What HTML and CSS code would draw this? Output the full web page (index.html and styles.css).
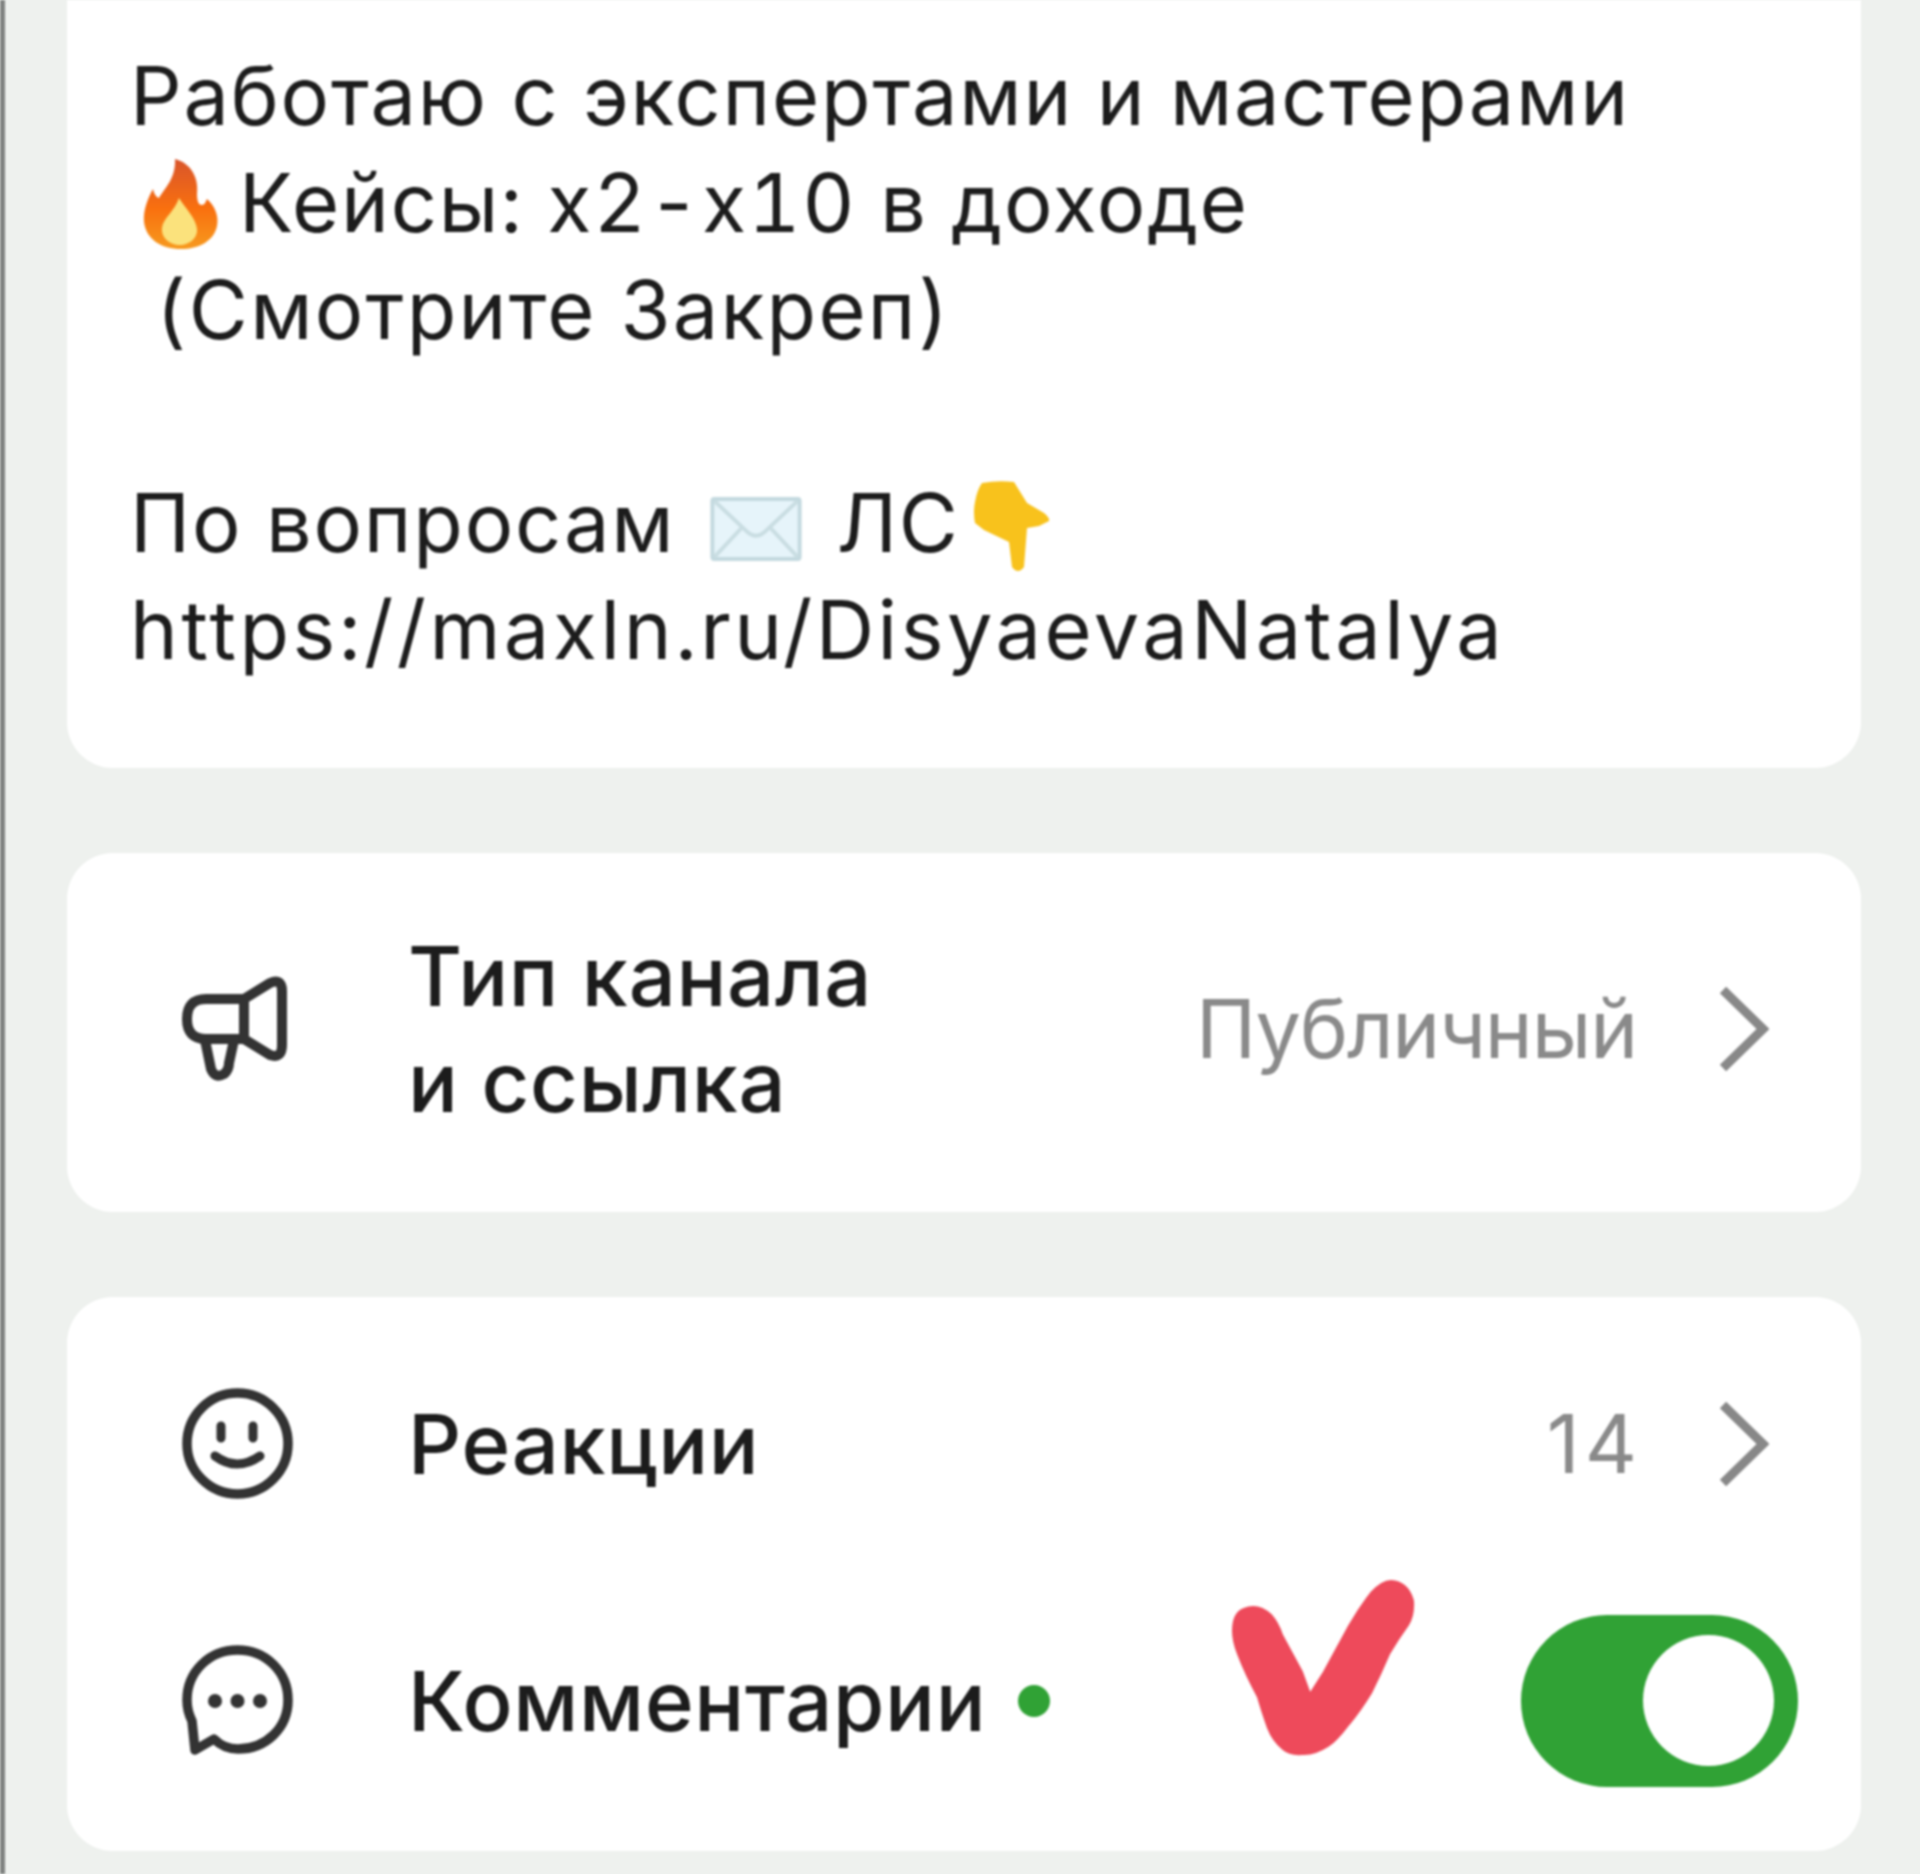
FILE: index.html
```html
<!DOCTYPE html>
<html lang="ru">
<head>
<meta charset="utf-8">
<title>Настройки канала</title>
<link rel="stylesheet" href="styles.css">
</head>
<body>
<div class="screen">
  <section class="card about">
    <p class="bio">Работаю с экспертами и мастерами<br><svg class="fire" viewBox="0 0 80 92"><defs><linearGradient id="fg" x1="0" y1="0" x2="0" y2="1"><stop offset="0" stop-color="#d9552b"/><stop offset=".55" stop-color="#f9700f"/><stop offset="1" stop-color="#f79a1e"/></linearGradient></defs><path fill="url(#fg)" d="M34 1C50 5 58 20 56 36C56 44 58 47 61 47C64 47 65 43 66 41C74 48 78 58 76 68C73 83 58 91 40 91C20 91 5 81 3 64C2 52 7 40 12 31C13 36 15 39 18 40C24 30 35 20 34 1Z"/><path fill="#fbe27c" d="M38 40C44 50 55 60 56 71C57 80 48 87 39 87C29 87 20 80 21 70C22 60 34 53 38 40Z"/></svg>Кейсы: x2-x10 в доходе<br><span class="indent">(Смотрите Закреп)</span><br><br>По вопросам <svg class="mail" viewBox="0 0 94 66"><rect x="2" y="2" width="90" height="62" rx="2" fill="#e6f4fa" stroke="#c3d9df" stroke-width="4"/><path d="M4 4L38 36Q47 44 56 36L90 4M4 62L32 32M90 62L62 32" fill="none" stroke="#c9dde2" stroke-width="4"/></svg> ЛС<svg class="hand" viewBox="0 0 76 92"><path fill="#f8c21c" d="M8 3Q24 0 40 2L53 23L70 33Q76 38 75 41L65 46L53 48L50 87Q44 95 38 87L35 62L10 50L1 43Q-1 32 1 22Q3 10 8 3Z"/></svg><br><span class="wide">https://maxln.ru/DisyaevaNatalya</span></p>
  </section>

  <section class="card">
    <div class="row row-tall">
      <div class="icon-cell">
        <svg class="icon" viewBox="0 0 111 111"><g fill="none" stroke="#333" stroke-width="10" stroke-linejoin="round" stroke-linecap="round" transform="translate(0 4)"><path d="M24 22H62V62H24Q5 62 5 42Q5 22 24 22Z"/><path d="M62 22L88 6Q100 1 100 14V68Q100 82 88 78L62 62"/><path d="M23 63L29 92Q33 102 42 97Q47 93 47 86L52 63"/></g></svg>
      </div>
      <div class="label grow">Тип канала<br>и ссылка</div>
      <div class="value">Публичный</div>
      <svg class="chev" viewBox="0 0 50 86"><path d="M4 4L44 43L4 82" fill="none" stroke="#888" stroke-width="9"/></svg>
    </div>
  </section>

  <section class="card list">
    <div class="row">
      <div class="icon-cell">
        <svg class="icon" viewBox="0 0 111 111"><circle cx="55.500" cy="55.500" r="50.500" fill="none" stroke="#333" stroke-width="9.500"/><path d="M39 38V50M71 38V50" stroke="#333" stroke-width="9" stroke-linecap="round"/><path d="M33 68Q55 84 78 68" fill="none" stroke="#333" stroke-width="9" stroke-linecap="round"/></svg>
      </div>
      <div class="label grow">Реакции</div>
      <div class="value count">14</div>
      <svg class="chev" viewBox="0 0 50 86"><path d="M4 4L44 43L4 82" fill="none" stroke="#888" stroke-width="9"/></svg>
    </div>
    <div class="row">
      <div class="icon-cell">
        <svg class="icon" viewBox="0 0 111 111"><path d="M55.500 5C84 5 106 27 106 55C106 83 84 104 56 104C46 104 38 100 32 94L13 105L10 76C7 70 5 63 5 55C5 27 27 5 55.500 5Z" fill="none" stroke="#333" stroke-width="9.500" stroke-linejoin="round"/><circle cx="33" cy="56" r="7" fill="#333"/><circle cx="55.500" cy="56" r="7" fill="#333"/><circle cx="78" cy="56" r="7" fill="#333"/></svg>
      </div>
      <div class="label">Комментарии</div>
      <span class="dot"></span>
      <div class="toggle"><span class="knob"></span></div>
      <svg class="tick" viewBox="0 0 185 178"><path d="M3 52Q3 34 14 30Q28 24 41 36Q48 44 52 56L72 93L80 115L94 93L119 47Q130 28 141 14Q152 2 161 2Q178 3 183 22Q184 36 178 46Q168 60 159 75Q150 96 141 114Q130 132 119 145Q108 160 98 167Q84 176 72 175Q60 176 53 170Q43 162 38 149Q32 132 28 118Q16 96 8 75Q3 62 3 52Z" fill="#ee4a5b" stroke="#ee4a5b" stroke-width="2" stroke-linejoin="round"/></svg>
    </div>
  </section>
</div>
</body>
</html>
```

FILE: styles.css
```css
html, body {
  margin: 0;
  padding: 0;
  height: 1874px;
  overflow: hidden;
  background: #eef1ee;
}

.screen {
  box-sizing: border-box;
  height: 1874px;
  padding: 0 59px 0 62px;
  border-left: 5px solid #7f8280;
  display: flex;
  flex-direction: column;
  gap: 85px;
  font-family: Inter, "Liberation Sans", sans-serif;
  color: #1c1c1c;
  filter: blur(1.1px);
}

.card {
  background: #fff;
  border-radius: 46px;
}

.about {
  box-sizing: border-box;
  height: 768px;
  padding: 43px 63px 0;
  border-radius: 0 0 46px 46px;
}

.bio {
  margin: 0;
  font-size: 81px;
  line-height: 106.800px;
  letter-spacing: 1.8px;
  white-space: nowrap;
  font-variant-numeric: tabular-nums;
}

.wide {
  letter-spacing: 3.500px;
}

.indent {
  margin-left: 25px;
  letter-spacing: 2.200px;
}

.fire {
  width: 80px;
  height: 92px;
  margin: 0 18px 0 11px;
  vertical-align: -18px;
}

.mail {
  width: 94px;
  height: 64px;
  margin: 0 10px;
  vertical-align: -9px;
}

.hand {
  width: 80px;
  height: 92px;
  margin-left: 12px;
  vertical-align: -20px;
}

.row {
  position: relative;
  display: flex;
  align-items: center;
  height: 257px;
  padding-right: 92px;
}

.row-tall {
  box-sizing: border-box;
  height: 359px;
  padding-bottom: 8px;
}

.list {
  padding: 18px 0 22px;
}

.icon-cell {
  box-sizing: border-box;
  width: 341px;
  padding-left: 115px;
  flex: none;
}

.icon {
  display: block;
  width: 111px;
  height: 111px;
  overflow: visible;
}

.label {
  flex: none;
  font-size: 83px;
  font-weight: 500;
  line-height: 106px;
  letter-spacing: 0.7px;
}

.grow {
  flex: 1 1 auto;
}

.value {
  font-size: 81px;
  letter-spacing: -1.1px;
  color: #8a8a8a;
  margin-right: 82px;
}

.count {
  letter-spacing: 5px;
  margin-right: 77px;
}

.chev {
  width: 50px;
  height: 86px;
  flex: none;
}

.dot {
  width: 32px;
  height: 32px;
  margin-left: 32px;
  border-radius: 50%;
  background: #30a235;
}

.toggle {
  box-sizing: border-box;
  display: flex;
  justify-content: flex-end;
  align-items: center;
  width: 277px;
  height: 172px;
  margin: 0 -29px 0 auto;
  padding-right: 24px;
  border-radius: 86px;
  background: #30a235;
}

.knob {
  width: 131px;
  height: 131px;
  border-radius: 50%;
  background: #fff;
}

.tick {
  position: absolute;
  right: 446px;
  top: 7px;
  width: 185px;
  height: 178px;
}
```
